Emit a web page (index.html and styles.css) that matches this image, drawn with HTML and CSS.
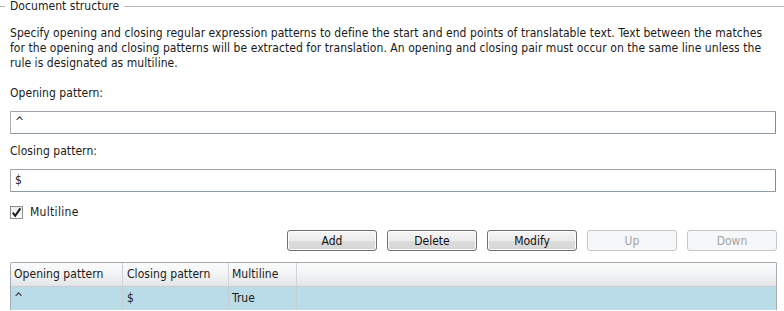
FILE: index.html
```html
<!DOCTYPE html>
<html>
<head>
<meta charset="utf-8">
<link rel="stylesheet" href="styles.css">
</head>
<body>
<div class="panel">
  <div class="legend">
    <span class="legend-lead"></span>
    <span class="legend-text">Document structure</span>
    <span class="legend-rule"></span>
  </div>
  <p class="desc">Specify opening and closing regular expression patterns to define the start and end points of translatable text. Text between the matches<br>for the opening and closing patterns will be extracted for translation. An opening and closing pair must occur on the same line unless the<br>rule is designated as multiline.</p>
  <div class="label label-open">Opening pattern:</div>
  <div class="field">^</div>
  <div class="label label-close">Closing pattern:</div>
  <div class="field">$</div>
  <div class="check-row">
    <span class="checkbox"><svg width="11" height="11" viewBox="0 0 11 11"><path d="M1.8 5.6 L4.2 8.8 L9.4 1.4" fill="none" stroke="#1c1c1c" stroke-width="2"/></svg></span>
    <span class="check-label">Multiline</span>
  </div>
  <div class="buttons">
    <button class="btn">Add</button>
    <button class="btn">Delete</button>
    <button class="btn">Modify</button>
    <button class="btn disabled">Up</button>
    <button class="btn disabled">Down</button>
  </div>
  <div class="grid">
    <div class="grid-head">
      <div class="cell c1">Opening pattern</div>
      <div class="cell c2">Closing pattern</div>
      <div class="cell c3">Multiline</div>
      <div class="cell c4"></div>
    </div>
    <div class="grid-row selected">
      <div class="cell c1">^</div>
      <div class="cell c2">$</div>
      <div class="cell c3">True</div>
      <div class="cell c4"></div>
    </div>
  </div>
</div>
</body>
</html>
```
FILE: styles.css
```css
html, body {
  margin: 0;
  padding: 0;
  background: #ffffff;
}
body {
  font-family: "DejaVu Sans Condensed", "DejaVu Sans", Tahoma, sans-serif;
  font-size: 12px;
  letter-spacing: 0.05px;
  color: #1a1a1a;
  width: 784px;
  height: 311px;
  overflow: hidden;
}
.panel {
  display: flex;
  flex-direction: column;
}
.legend {
  display: flex;
  align-items: center;
  height: 12px;
  line-height: 12px;
}
.legend-lead {
  width: 5px;
  border-top: 1px solid #b9b9b9;
  margin-right: 5px;
}
.legend-text {
  white-space: nowrap;
}
.legend-rule {
  flex: 1;
  border-top: 1px solid #b9b9b9;
  margin-left: 5px;
}
.desc {
  margin: 14px 0 0 10px;
  line-height: 15px;
  white-space: nowrap;
}
.label {
  margin-left: 10px;
  line-height: 15px;
  height: 15px;
}
.label-open {
  margin-top: 15px;
}
.label-close {
  margin-top: 10px;
}
.field {
  margin: 10px 8px 0 10px;
  height: 21px;
  line-height: 21px;
  padding-left: 4px;
  border: 1px solid #abadb3;
  border-top-color: #9ea4ab;
  border-right-color: #7c8c9c;
  border-bottom-color: #8e9aa6;
  border-radius: 1px;
  background: #fff;
}
.check-row {
  display: flex;
  align-items: center;
  margin: 13px 0 0 10px;
  height: 14px;
}
.checkbox {
  width: 11px;
  height: 11px;
  border: 1px solid #8f8f8f;
  background: linear-gradient(#ececec, #ffffff);
  display: flex;
  align-items: center;
  justify-content: center;
}
.check-label {
  margin-left: 7px;
  letter-spacing: 0.3px;
}
.buttons {
  display: flex;
  justify-content: flex-end;
  gap: 10px;
  margin: 11px 7px 0 0;
}
.btn {
  width: 90px;
  height: 21px;
  padding: 0;
  font-family: inherit;
  font-size: 12px;
  color: #111;
  border: 1px solid #707070;
  border-radius: 3px;
  background: linear-gradient(#f6f6f6 0%, #ebebeb 50%, #dddddd 51%, #d6d6d6 100%);
  box-shadow: inset 0 0 0 1px #fcfcfc;
}
.btn.disabled {
  color: #a3a3a3;
  border-color: #c4c8cc;
  background: #f6f7f8;
  box-shadow: none;
}
.grid {
  margin: 11px 7px 0 10px;
  border: 1px solid #a4abb3;
  border-bottom: none;
  border-radius: 2px 2px 0 0;
}
.grid-head, .grid-row {
  display: flex;
}
.grid-head {
  height: 23px;
  background: linear-gradient(#fafbfb 0%, #f3f4f5 45%, #e2e4e7 100%);
  border-bottom: 1px solid #c9ccd0;
}
.grid-row {
  height: 23px;
}
.grid-row.selected {
  background: #badce8;
}
.cell {
  line-height: 23px;
  padding-left: 3px;
  box-sizing: border-box;
  border-right: 1px solid #d0d4d8;
  white-space: nowrap;
}
.grid-row .cell {
  border-right-color: #c8ccd0;
}
.c1 { width: 112px; }
.c2 { width: 106px; padding-left: 4px; }
.c3 { width: 68px; }
.c4 { flex: 1; border-right: none; }
```
